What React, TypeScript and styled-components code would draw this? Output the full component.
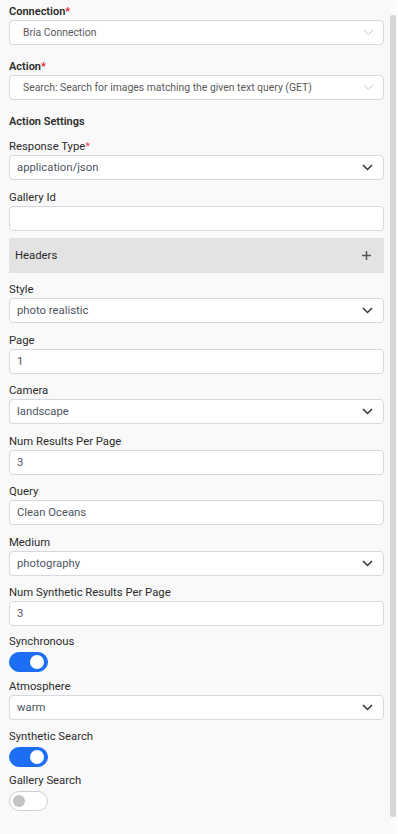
import React from "react";
import styled, { createGlobalStyle } from "styled-components";

const Global = createGlobalStyle`
html, body {
  margin: 0;
  padding: 0;
  background: #f9f9f9;
  font-family: Roboto, "Liberation Sans", sans-serif;
}
`;

const Panel = styled.div`
  height: 834px;
  width: 398px;
  display: flex;
  background: #f9f9f9;
  overflow: hidden;
`;

const Rail = styled.div`
  width: 8px;
  flex-shrink: 0;
  display: flex;
  flex-direction: column;
  padding: 15px 1px 17px 0;
  box-sizing: border-box;
  background: #fafafa;
  border-right: 1px solid #fdfdfd;
`;

const Thumb = styled.div`
  flex: 1;
  background: #d6d6d6;
  border-radius: 2px;
`;

const Form = styled.div`
  flex: 1;
  display: flex;
  flex-direction: column;
  padding: 4px 6px 10px 9px;

  > * {
    flex-shrink: 0;
  }
`;

const Field = styled.div<{ $gap?: number }>`
  display: flex;
  flex-direction: column;
  margin-bottom: ${(p) => (p.$gap ?? 9.5)}px;
`;

const Label = styled.label<{ $strong?: boolean }>`
  font-size: ${(p) => (p.$strong ? "11px" : "11.3px")};
  line-height: 16px;
  color: #2b2b2b;
  font-weight: ${(p) => (p.$strong ? 600 : 400)};
`;

const Req = styled.span<{ $soft?: boolean }>`
  color: ${(p) => (p.$soft ? "#ee4b5f" : "#e0242f")};
`;

const SectionTitle = styled.div`
  font-size: 11px;
  line-height: 16px;
  font-weight: 600;
  color: #2b2b2b;
  margin-bottom: 9px;
`;

const Box = styled.div<{ $wide?: boolean }>`
  height: 25px;
  box-sizing: border-box;
  background: #fff;
  border: 1px solid #d6d9de;
  border-radius: 4px;
  display: flex;
  align-items: center;
  justify-content: space-between;
  padding: 0 ${(p) => (p.$wide ? "13px" : "7px")};
  padding-right: ${(p) => (p.$wide ? "9px" : "10px")};
  font-size: ${(p) => (p.$wide ? "10.4px" : "11.3px")};
  color: ${(p) => (p.$wide ? "#5a5a5a" : "#4d5562")};
  white-space: nowrap;
`;

const HeadersBar = styled.div`
  height: 35px;
  background: #e3e3e3;
  display: flex;
  align-items: center;
  justify-content: space-between;
  padding: 0 13px 0 6px;
  font-size: 11.3px;
  color: #2b2b2b;
  margin: -2px 0 9px;
`;

const Toggle = styled.div<{ $on?: boolean }>`
  width: 39px;
  height: 20px;
  box-sizing: border-box;
  border-radius: 10px;
  background: ${(p) => (p.$on ? "#1c6ff5" : "#fff")};
  border: 1px solid ${(p) => (p.$on ? "#1c6ff5" : "#cfcfcf")};
  display: flex;
  align-items: center;
  justify-content: ${(p) => (p.$on ? "flex-end" : "flex-start")};
  padding: 0 3px;
  margin-top: 2px;

  &::after {
    content: "";
    width: ${(p) => (p.$on ? "14px" : "12px")};
    height: ${(p) => (p.$on ? "14px" : "12px")};
    border-radius: 50%;
    background: ${(p) => (p.$on ? "#fff" : "#c4c4c4")};
  }
`;

const Chevron = ({ light }: { light?: boolean }) => (
  <svg width="11" height="7" viewBox="0 0 11 7" fill="none">
    <path
      d="M1 1l4.5 4.5L10 1"
      stroke={light ? "#c2c6cc" : "#333"}
      strokeWidth={light ? 1 : 1.5}
    />
  </svg>
);

const Plus = () => (
  <svg width="9" height="9" viewBox="0 0 9 9">
    <path d="M4.5 0v9M0 4.5h9" stroke="#555" strokeWidth="1.5" />
  </svg>
);

type Item =
  | { kind: "select" | "input"; label: string; value: string; gap?: number }
  | { kind: "toggle"; label: string; on: boolean; gap?: number };

const items: Item[] = [
  { kind: "select", label: "Style", value: "photo realistic" },
  { kind: "input", label: "Page", value: "1" },
  { kind: "select", label: "Camera", value: "landscape" },
  { kind: "input", label: "Num Results Per Page", value: "3" },
  { kind: "input", label: "Query", value: "Clean Oceans" },
  { kind: "select", label: "Medium", value: "photography" },
  { kind: "input", label: "Num Synthetic Results Per Page", value: "3", gap: 7.5 },
  { kind: "toggle", label: "Synchronous", on: true },
  { kind: "select", label: "Atmosphere", value: "warm", gap: 9 },
  { kind: "toggle", label: "Synthetic Search", on: true, gap: 6 },
  { kind: "toggle", label: "Gallery Search", on: false },
];

export default function App() {
  return (
    <>
      <Global />
      <Panel>
        <Form>
          <Field $gap={14}>
            <Label $strong>
              Connection<Req>*</Req>
            </Label>
            <Box $wide>
              <span>Bria Connection</span>
              <Chevron light />
            </Box>
          </Field>
          <Field $gap={14}>
            <Label $strong>
              Action<Req>*</Req>
            </Label>
            <Box $wide>
              <span>Search: Search for images matching the given text query (GET)</span>
              <Chevron light />
            </Box>
          </Field>
          <SectionTitle>Action Settings</SectionTitle>
          <Field>
            <Label>
              Response Type<Req $soft>*</Req>
            </Label>
            <Box>
              <span>application/json</span>
              <Chevron />
            </Box>
          </Field>
          <Field>
            <Label>Gallery Id</Label>
            <Box />
          </Field>
          <HeadersBar>
            <span>Headers</span>
            <Plus />
          </HeadersBar>
          {items.map((it) =>
            it.kind === "toggle" ? (
              <Field key={it.label} $gap={it.gap ?? 7}>
                <Label>{it.label}</Label>
                <Toggle $on={it.on} />
              </Field>
            ) : (
              <Field key={it.label} $gap={it.gap}>
                <Label>{it.label}</Label>
                <Box>
                  <span>{it.value}</span>
                  {it.kind === "select" && <Chevron />}
                </Box>
              </Field>
            )
          )}
        </Form>
        <Rail>
          <Thumb />
        </Rail>
      </Panel>
    </>
  );
}
